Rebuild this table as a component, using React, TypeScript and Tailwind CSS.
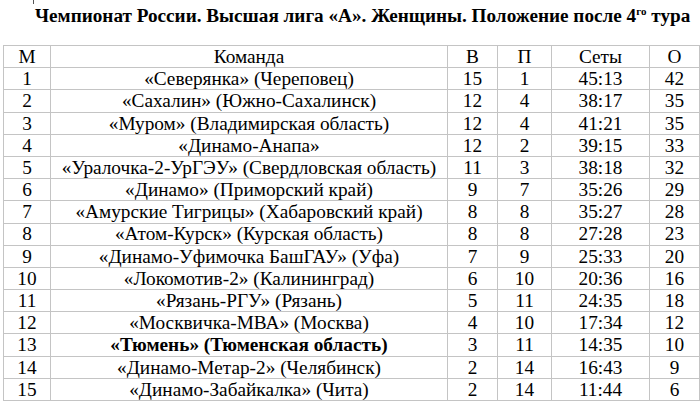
import React from "react";

const rows: [string, React.ReactNode, string, string, string, string][] = [
  ["1", "«Северянка» (Череповец)", "15", "1", "45:13", "42"],
  ["2", "«Сахалин» (Южно-Сахалинск)", "12", "4", "38:17", "35"],
  ["3", "«Муром» (Владимирская область)", "12", "4", "41:21", "35"],
  ["4", "«Динамо-Анапа»", "12", "2", "39:15", "33"],
  ["5", "«Уралочка-2-УрГЭУ» (Свердловская область)", "11", "3", "38:18", "32"],
  ["6", "«Динамо» (Приморский край)", "9", "7", "35:26", "29"],
  ["7", "«Амурские Тигрицы» (Хабаровский край)", "8", "8", "35:27", "28"],
  ["8", "«Атом-Курск» (Курская область)", "8", "8", "27:28", "23"],
  ["9", "«Динамо-Уфимочка БашГАУ» (Уфа)", "7", "9", "25:33", "20"],
  ["10", "«Локомотив-2» (Калининград)", "6", "10", "20:36", "16"],
  ["11", "«Рязань-РГУ» (Рязань)", "5", "11", "24:35", "18"],
  ["12", "«Москвичка-МВА» (Москва)", "4", "10", "17:34", "12"],
  ["13", <b key="b">«Тюмень» (Тюменская область)</b>, "3", "11", "14:35", "10"],
  ["14", "«Динамо-Метар-2» (Челябинск)", "2", "14", "16:43", "9"],
  ["15", "«Динамо-Забайкалка» (Чита)", "2", "14", "11:44", "6"],
];

export default function App() {
  const td =
    "border border-[#c4c4c4] text-center p-0 leading-none text-[19.3px] font-['Liberation_Serif',serif]";
  return (
    <div className="w-[700px] h-[401px] bg-white overflow-hidden text-black relative font-['Liberation_Serif',serif]">
      <div className="absolute left-[33px] top-0 w-px h-[4px] bg-[#555]" />
      <div className="h-[45px] pl-[35px] pt-[5px] text-[19.2px] font-bold whitespace-nowrap leading-[22px] font-['Liberation_Serif',serif]">
        Чемпионат России. Высшая лига «А». Женщины. Положение после 4
        <sup className="text-[11px] relative -top-[7px]">го</sup> тура
      </div>
      <table className="ml-[3px] w-[697px] table-fixed border-collapse font-['Liberation_Serif',serif] text-[19.3px]">
        <colgroup>
          <col className="w-[47px]" />
          <col className="w-[397px]" />
          <col className="w-[50px]" />
          <col className="w-[54px]" />
          <col className="w-[98px]" />
          <col className="w-[50px]" />
        </colgroup>
        <tbody>
          <tr className="h-[22.2px]">
            <td className={td}>М</td>
            <td className={td}>Команда</td>
            <td className={td}>В</td>
            <td className={td}>П</td>
            <td className={td}>Сеты</td>
            <td className={td}>О</td>
          </tr>
          {rows.map((r) => (
            <tr key={r[0]} className="h-[22.2px]">
              <td className={td}>{r[0]}</td>
              <td className={td + " whitespace-nowrap"}>{r[1]}</td>
              <td className={td}>{r[2]}</td>
              <td className={td}>{r[3]}</td>
              <td className={td}>{r[4]}</td>
              <td className={td}>{r[5]}</td>
            </tr>
          ))}
        </tbody>
      </table>
    </div>
  );
}
